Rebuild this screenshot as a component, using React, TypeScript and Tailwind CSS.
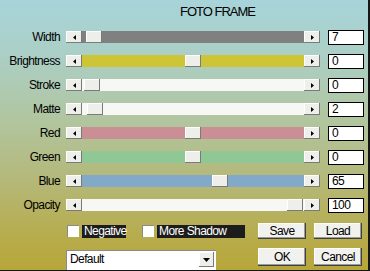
import React from "react";

const rows = [
  { label: "Width", track: "bg-[#808080]", thumb: 4, value: "7" },
  { label: "Brightness", track: "bg-[#cdc535]", thumb: 103, value: "0" },
  { label: "Stroke", track: "bg-[#f7f7f5]", thumb: 2, value: "0" },
  { label: "Matte", track: "bg-[#f7f7f5]", thumb: 5, value: "2" },
  { label: "Red", track: "bg-[#c98f94]", thumb: 103, value: "0" },
  { label: "Green", track: "bg-[#8fc894]", thumb: 103, value: "0" },
  { label: "Blue", track: "bg-[#82a9c8]", thumb: 130, value: "65" },
  { label: "Opacity", track: "bg-[#f7f7f5]", thumb: 205, value: "100" },
];

const raised =
  "bg-[#eeeeea] shadow-[inset_-1px_-1px_#7a7a7a,inset_1px_1px_#ffffff]";

function Arrow({ dir }: { dir: "left" | "right" | "down" }) {
  if (dir === "down")
    return (
      <svg width="7" height="4" viewBox="0 0 7 4">
        <polygon points="0,0 7,0 3.5,4" fill="#000" />
      </svg>
    );
  return (
    <svg width="3" height="5" viewBox="0 0 3 5">
      {dir === "left" ? (
        <polygon points="3,0 3,5 0,2.5" fill="#000" />
      ) : (
        <polygon points="0,0 0,5 3,2.5" fill="#000" />
      )}
    </svg>
  );
}

function Row({ r }: { r: (typeof rows)[number] }) {
  return (
    <div className="flex h-[16px] items-center">
      <div className="w-[60px] text-right leading-[14px]">{r.label}</div>
      <div className={`ml-[6px] flex h-[12px] w-[16px] items-center justify-center ${raised}`}>
        <Arrow dir="left" />
      </div>
      <div className={`relative h-[12px] w-[222px] ${r.track}`}>
        <div
          className={`absolute top-0 h-[12px] w-[16px] ${raised}`}
          style={{ left: r.thumb }}
        />
      </div>
      <div className={`flex h-[12px] w-[16px] items-center justify-center ${raised}`}>
        <Arrow dir="right" />
      </div>
      <div className="ml-[8px] h-[15px] w-[36px] border border-black bg-white pl-[3px] leading-[13px]">
        {r.value}
      </div>
    </div>
  );
}

function Btn({ children, h }: { children: React.ReactNode; h: string }) {
  return (
    <div
      className={`flex w-[48px] ${h} items-center justify-center bg-[#f1f1ee] shadow-[inset_-1px_-1px_#404040,inset_-2px_-2px_#9a9a9a,inset_1px_1px_#ffffff]`}
    >
      {children}
    </div>
  );
}

export default function App() {
  return (
    <div
      className="relative flex h-[271px] w-[370px] flex-col overflow-hidden border-r-2 border-b border-[#161616] bg-[linear-gradient(to_bottom,#a7d4da_0%,#abcfc6_20%,#b1c59e_45%,#b4b97c_65%,#b7ac4c_88%,#b7a63a_100%)] text-[12px] tracking-[-0.6px] text-black"
      style={{ fontFamily: '"Liberation Sans", Arial, sans-serif' }}
    >
      <div className="pt-[4px] pl-[180px] text-[13px] leading-[16px] tracking-[-1px]">
        FOTO FRAME
      </div>
      <div className="mt-[9px] flex h-[187px] flex-col justify-between">
        {rows.map((r) => (
          <Row key={r.label} r={r} />
        ))}
      </div>
      <div className="mt-[10px] flex h-[16px] items-center pl-[67px]">
        <div className="h-[12px] w-[12px] bg-white shadow-[inset_1px_1px_#8a8a8a,inset_-1px_-1px_#ffffff]" />
        <div className="ml-[3px] h-[13px] w-[44px] bg-[#1c1c1c] pl-[2px] leading-[13px] text-white">
          Negative
        </div>
        <div className="ml-[16px] h-[12px] w-[12px] bg-white shadow-[inset_1px_1px_#8a8a8a,inset_-1px_-1px_#ffffff]" />
        <div className="ml-[3px] h-[13px] w-[88px] bg-[#1c1c1c] pl-[2px] leading-[13px] text-white">
          More Shadow
        </div>
        <div className="ml-[13px]">
          <Btn h="h-[16px]">Save</Btn>
        </div>
        <div className="ml-[8px]">
          <Btn h="h-[16px]">Load</Btn>
        </div>
      </div>
      <div className="mt-[9px] flex items-start pl-[66px]">
        <div className="mt-[2px] flex h-[20px] w-[150px] items-start bg-white pt-[2px] shadow-[inset_1px_1px_#8a8a8a]">
          <div className="flex-1 pl-[4px] leading-[14px]">Default</div>
          <div className={`mr-[2px] flex h-[15px] w-[15px] items-center justify-center ${raised}`}>
            <Arrow dir="down" />
          </div>
        </div>
        <div className="ml-[42px]">
          <Btn h="h-[18px]">OK</Btn>
        </div>
        <div className="ml-[8px]">
          <Btn h="h-[18px]">Cancel</Btn>
        </div>
      </div>
    </div>
  );
}
